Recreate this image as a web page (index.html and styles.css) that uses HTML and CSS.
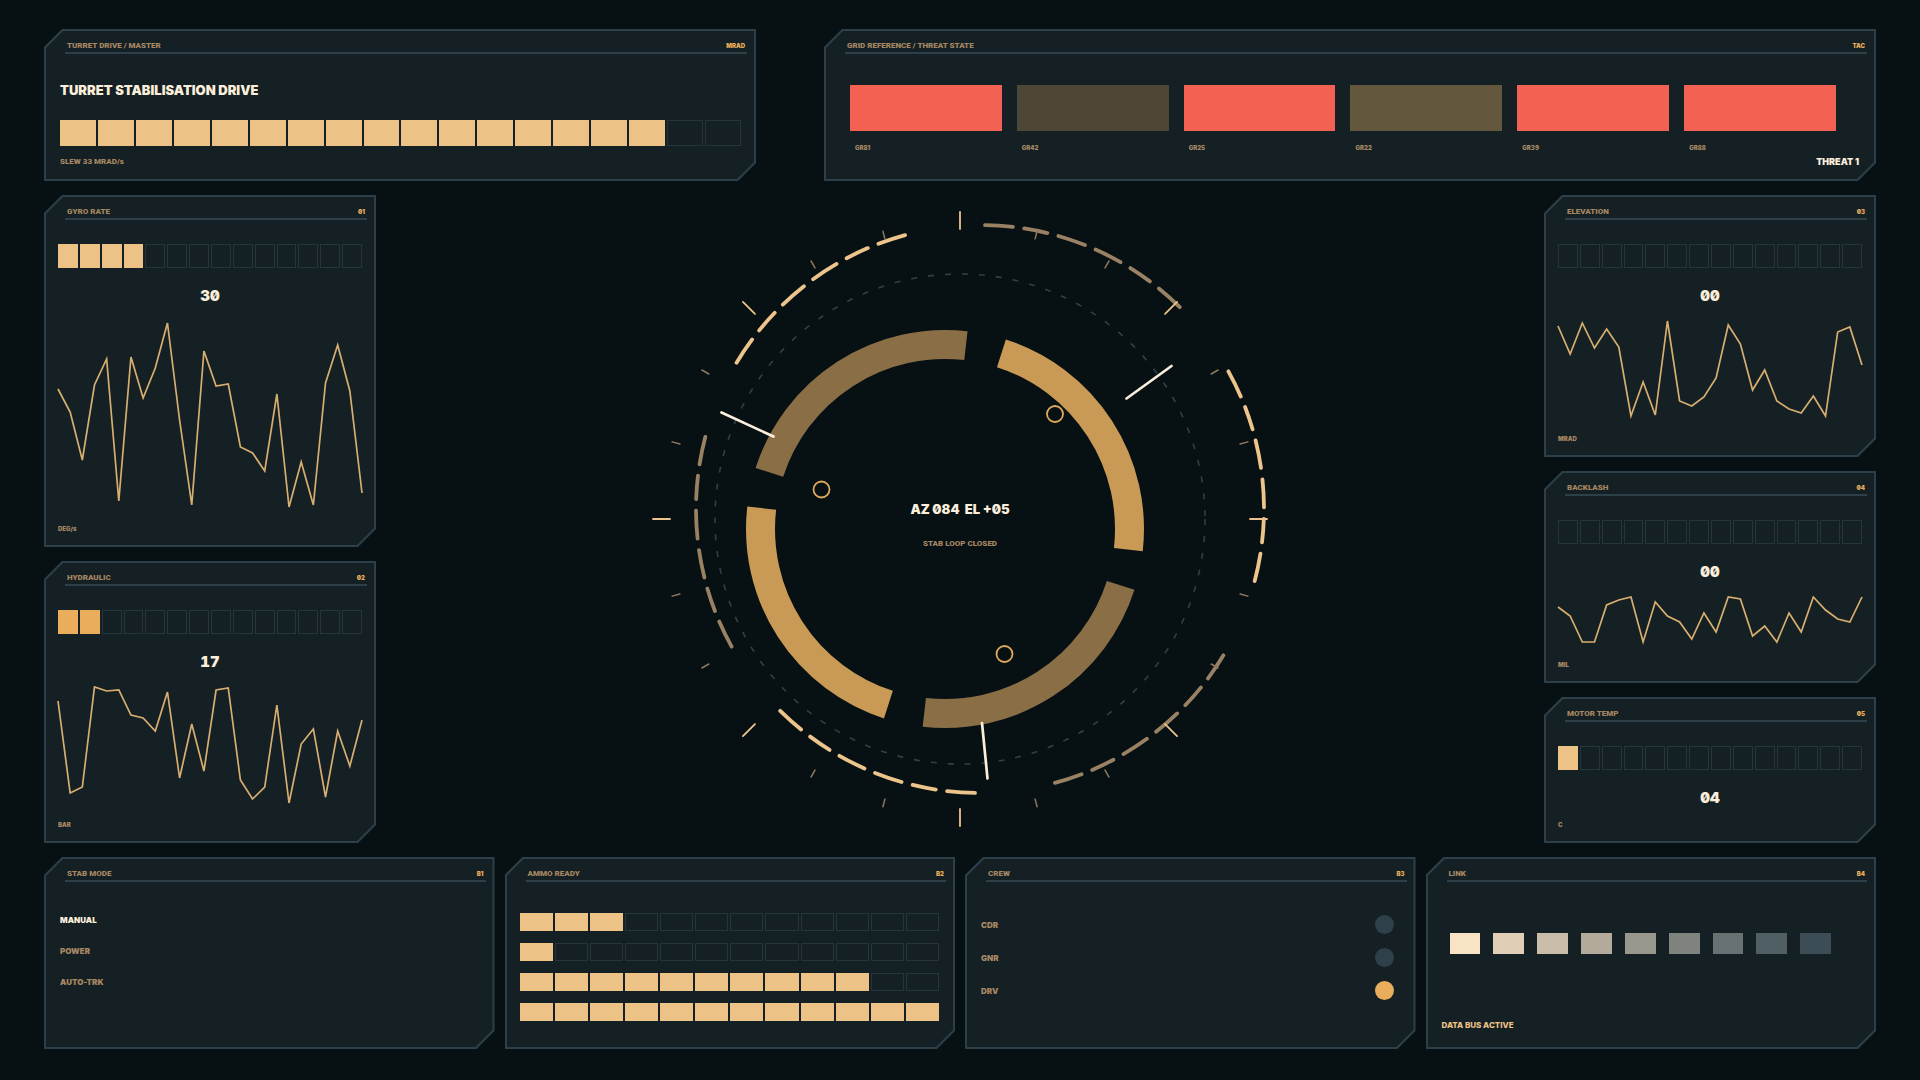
FILE: index.html
```html
<!DOCTYPE html>
<html lang="en">
  <head>
    <meta charset="UTF-8" />
    <meta name="viewport" content="width=device-width, initial-scale=1.0" />
    <title>Turret Stabilisation Drive</title>
    <link rel="stylesheet" href="styles.css">
  </head>
  <body>
    <main class="console">
      <!-- Top row -->
      <div class="row-top">
        <section class="panel">
          <header class="panel-head">
            <h2>TURRET DRIVE / MASTER</h2>
            <span class="tag">MRAD</span>
          </header>
          <div class="drive">
            <h1>TURRET STABILISATION DRIVE</h1>
            <div class="cells cells-drive" data-total="18" data-on="16"></div>
            <p class="note">SLEW 33 MRAD/s</p>
          </div>
        </section>

        <section class="panel">
          <header class="panel-head">
            <h2>GRID REFERENCE / THREAT STATE</h2>
            <span class="tag">TAC</span>
          </header>
          <ul class="threats">
            <li><span class="block hot"></span><span class="grid-ref">GR81</span></li>
            <li><span class="block cold"></span><span class="grid-ref">GR42</span></li>
            <li><span class="block hot"></span><span class="grid-ref">GR25</span></li>
            <li><span class="block warm"></span><span class="grid-ref">GR22</span></li>
            <li><span class="block hot"></span><span class="grid-ref">GR39</span></li>
            <li><span class="block hot"></span><span class="grid-ref">GR88</span></li>
          </ul>
          <p class="threat-level">THREAT 1</p>
        </section>
      </div>

      <!-- Gauges and dial -->
      <div class="row-middle">
        <div class="side side-left">
          <section class="panel">
            <header class="panel-head">
              <h2>GYRO RATE</h2>
              <span class="tag">01</span>
            </header>
            <div class="gauge">
              <div class="cells" data-total="14" data-on="4"></div>
              <p class="value">30</p>
              <svg class="spark" viewBox="0 0 25 194" preserveAspectRatio="none" data-values="72,95,143,68,42,184,40,81,51,6,103,188,34,69,67,130,136,154,77,190,145,188,66,28,74,176"></svg>
              <p class="unit">DEG/s</p>
            </div>
          </section>

          <section class="panel">
            <header class="panel-head">
              <h2>HYDRAULIC</h2>
              <span class="tag">02</span>
            </header>
            <div class="gauge">
              <div class="cells amber" data-total="14" data-on="2"></div>
              <p class="value">17</p>
              <svg class="spark" viewBox="0 0 25 124" preserveAspectRatio="none" data-values="18,110,104,4,8,7,32,35,48,9,95,41,88,7,5,97,116,104,22,120,61,46,114,48,83,37"></svg>
              <p class="unit">BAR</p>
            </div>
          </section>
        </div>

        <svg class="dial" viewBox="-324 -324 648 648">
          <circle class="dotted" r="245" />
          <g id="arcs" transform="translate(20 -10)"></g>
          <g id="ticks"></g>

          <g class="ring" transform="translate(-15 10)">
            <circle class="ring-bright" r="184.5" transform="rotate(-72.2)" />
            <circle class="ring-dim" r="184.5" transform="rotate(17.8)" />
          </g>

          <g class="pins">
            <line x1="-238.5" y1="-106.5" x2="-186.5" y2="-82.5" />
            <line x1="211.5" y1="-153" x2="166.5" y2="-120.5" />
            <line x1="22" y1="204" x2="27.5" y2="259.5" />
          </g>

          <g class="markers">
            <circle cx="-138.5" cy="-29.5" r="8" />
            <circle cx="95" cy="-105" r="8" />
            <circle cx="44.5" cy="135" r="8" />
          </g>

          <text class="bearing" x="0" y="-5">AZ 084&#160; EL +05</text>
          <text class="loop" x="0" y="27">STAB LOOP CLOSED</text>
        </svg>

        <div class="side side-right">
          <section class="panel">
            <header class="panel-head">
              <h2>ELEVATION</h2>
              <span class="tag">03</span>
            </header>
            <div class="gauge">
              <div class="cells" data-total="14" data-on="0"></div>
              <p class="value">00</p>
              <svg class="spark" viewBox="0 0 25 104" preserveAspectRatio="none" data-values="9,37,6,31,12,30,99,65,98,4,84,89,80,61,8,27,73,53,84,92,96,79,99,15,10,48"></svg>
              <p class="unit">MRAD</p>
            </div>
          </section>

          <section class="panel">
            <header class="panel-head">
              <h2>BACKLASH</h2>
              <span class="tag">04</span>
            </header>
            <div class="gauge">
              <div class="cells" data-total="14" data-on="0"></div>
              <p class="value">00</p>
              <svg class="spark" viewBox="0 0 25 54" preserveAspectRatio="none" data-values="14,23,49,49,12,7,4,49,9,23,29,46,20,39,4,6,43,33,49,20,39,4,17,26,29,4"></svg>
              <p class="unit">MIL</p>
            </div>
          </section>

          <section class="panel">
            <header class="panel-head">
              <h2>MOTOR TEMP</h2>
              <span class="tag">05</span>
            </header>
            <div class="gauge">
              <div class="cells" data-total="14" data-on="1"></div>
              <p class="value">04</p>
              <p class="unit">C</p>
            </div>
          </section>
        </div>
      </div>

      <!-- Bottom row -->
      <div class="row-bottom">
        <section class="panel">
          <header class="panel-head">
            <h2>STAB MODE</h2>
            <span class="tag">B1</span>
          </header>
          <div class="modes">
            <button class="mode active" type="button">MANUAL</button>
            <button class="mode" type="button">POWER</button>
            <button class="mode" type="button">AUTO-TRK</button>
          </div>
        </section>

        <section class="panel">
          <header class="panel-head">
            <h2>AMMO READY</h2>
            <span class="tag">B2</span>
          </header>
          <div class="ammo">
            <div class="cells" data-total="12" data-on="3"></div>
            <div class="cells" data-total="12" data-on="1"></div>
            <div class="cells" data-total="12" data-on="10"></div>
            <div class="cells" data-total="12" data-on="12"></div>
          </div>
        </section>

        <section class="panel">
          <header class="panel-head">
            <h2>CREW</h2>
            <span class="tag">B3</span>
          </header>
          <ul class="crew">
            <li>CDR <span class="lamp"></span></li>
            <li>GNR <span class="lamp"></span></li>
            <li>DRV <span class="lamp on"></span></li>
          </ul>
        </section>

        <section class="panel">
          <header class="panel-head">
            <h2>LINK</h2>
            <span class="tag">B4</span>
          </header>
          <div class="link-bars">
            <span></span><span></span><span></span>
            <span></span><span></span><span></span>
            <span></span><span></span><span></span>
          </div>
          <p class="bus">DATA BUS ACTIVE</p>
        </section>
      </div>
    </main>

    <script src="script.js"></script>
  </body>
</html>
```
FILE: styles.css
```css
:root {
  --bg: #071013;
  --panel: #152024;
  --line: #2d404a;
  --cell: #26353d;
  --sand: #edc287;
  --amber: #e9ad5c;
  --muted: #a68763;
  --cream: #fbeedb;
  --red: #f26152;
}

* {
  box-sizing: border-box;
}

body {
  margin: 0;
  background-color: var(--bg);
  color: var(--muted);
  font-family: Inter, "Liberation Sans", sans-serif;
  font-feature-settings: "zero";
  font-weight: 900;
  font-size: 8px;
  line-height: 12px;
}

h1,
h2,
p,
ul {
  margin: 0;
  padding: 0;
  list-style: none;
}

.console {
  display: grid;
  grid-template-rows: minmax(152px, auto) 1fr minmax(192px, auto);
  gap: 14px;
  min-height: 100vh;
  padding: 29px 44px 31px;
}

.row-top {
  display: grid;
  grid-template-columns: 712fr 1052fr;
  gap: 68px;
}

.row-middle {
  display: grid;
  grid-template-columns: 332px 1fr 332px;
}

.row-bottom {
  display: grid;
  grid-template-columns: repeat(4, 1fr);
  gap: 10px;
}

/* Panel with two cut corners: outline colour below, fill on top */
.panel {
  position: relative;
  z-index: 0;
  display: flex;
  flex-direction: column;
  min-width: 0;
  background-color: var(--line);
  clip-path: polygon(18px 0, 100% 0, 100% calc(100% - 18px), calc(100% - 18px) 100%, 0 100%, 0 18px);
}

.panel::before {
  content: "";
  position: absolute;
  inset: 2px;
  z-index: -1;
  background-color: var(--panel);
  clip-path: polygon(17px 0, 100% 0, 100% calc(100% - 17px), calc(100% - 17px) 100%, 0 100%, 0 17px);
}

.panel-head {
  display: flex;
  justify-content: space-between;
  height: 25px;
  margin: 0 9px 0 21px;
  padding: 9px 2px 0;
  border-bottom: 2px solid var(--line);
  line-height: 16px;
}

.panel-head h2,
.note,
.loop {
  font-family: Roboto, "Liberation Sans", sans-serif;
  font-size: 8px;
  font-weight: 900;
}

.tag {
  color: var(--amber);
  font-size: 6px;
}

/* Segment bars */
.cells {
  display: flex;
  gap: 2px;
  height: 24px;
}

.cell {
  flex: 1;
  border: 1px solid var(--cell);
}

.cell.on {
  border-color: var(--sand);
  background-color: var(--sand);
}

.amber .cell.on {
  border-color: var(--amber);
  background-color: var(--amber);
}

/* Turret drive */
.drive {
  padding: 26px 15px 0 16px;
}

.drive h1 {
  color: var(--cream);
  font-size: 13px;
  font-weight: 900;
  line-height: 20px;
}

.cells-drive {
  height: 26px;
  margin: 20px 0 10px;
}

/* Threat state */
.threats {
  display: grid;
  grid-template-columns: repeat(6, 1fr);
  gap: 15px;
  padding: 31px 40px 0 26px;
}

.block {
  display: block;
  height: 46px;
  margin-bottom: 11px;
}

.grid-ref {
  display: block;
  padding-left: 5px;
  font-size: 6px;
}

.hot {
  background-color: var(--red);
}

.warm {
  background-color: #63573e;
}

.cold {
  background-color: #4e4737;
}

.threat-level {
  padding: 2px 17px 0;
  color: var(--cream);
  font-size: 9px;
  text-align: right;
}

/* Side gauges */
.side {
  display: grid;
  gap: 14px;
}

.side-left {
  grid-template-rows: 352fr 282fr;
}

.side-right {
  grid-template-rows: 262fr 212fr 146fr;
}

.gauge {
  display: flex;
  flex: 1;
  flex-direction: column;
  padding: 24px 14px 12px;
}

.value {
  margin: 18px 0 11px;
  color: var(--cream);
  font-size: 15px;
  font-feature-settings: "zero", "tnum";
  line-height: 20px;
  text-align: center;
}

.spark {
  flex: 1 1 0px;
  width: 100%;
  height: 0;
  min-height: 0;
  margin-bottom: 12px;
  overflow: visible;
}

.spark polyline {
  fill: none;
  stroke: #d8ae70;
  stroke-width: 1.7;
  vector-effect: non-scaling-stroke;
}

.unit {
  margin-top: auto;
  font-size: 6px;
}

/* Dial: takes the height the side columns leave it */
.dial {
  width: 100%;
  height: 0;
  min-height: 100%;
}

.dial circle,
.dial path {
  fill: none;
}

.dotted {
  stroke: #2f4048;
  stroke-width: 1.6;
  stroke-dasharray: 6 11;
}

.arc {
  stroke-width: 3.8;
  stroke-linecap: round;
  stroke-dasharray: 28 11.5 23.5 11.5 28 11.5;
}

.bright {
  stroke: #edc58c;
}

.dim {
  stroke: #998163;
}

.tick {
  stroke: #8f7a5d;
  stroke-width: 1.5;
  stroke-linecap: round;
}

.tick.major {
  stroke: #edc58c;
  stroke-width: 1.8;
}

.ring circle {
  stroke-width: 29;
  stroke-dasharray: 253.1 326.5;
}

.ring-bright {
  stroke: #c89a55;
}

.ring-dim {
  stroke: #896e46;
}

.pins line {
  stroke: var(--cream);
  stroke-width: 2.7;
  stroke-linecap: round;
}

.markers circle {
  stroke: #dfa95c;
  stroke-width: 1.8;
}

.dial text {
  text-anchor: middle;
}

.bearing {
  fill: var(--cream);
  font-size: 13px;
}

.loop {
  fill: var(--muted);
}

/* Stab mode */
.modes {
  display: flex;
  flex-direction: column;
  align-items: flex-start;
  gap: 19px;
  padding: 32px 16px 0;
}

.mode {
  padding: 0;
  border: 0;
  background: none;
  color: var(--muted);
  font: inherit;
  cursor: pointer;
}

.mode.active {
  color: var(--cream);
}

/* Ammo */
.ammo {
  display: flex;
  flex-direction: column;
  gap: 12px;
  padding: 31px 16px 0 15px;
}

.ammo .cells {
  height: 18px;
}

/* Crew */
.crew {
  display: flex;
  flex-direction: column;
  gap: 14px;
  padding: 33px 22px 0 16px;
}

.crew li {
  display: flex;
  align-items: center;
  justify-content: space-between;
}

.lamp {
  width: 19px;
  height: 19px;
  border-radius: 50%;
  background-color: #2e404a;
}

.lamp.on {
  background-color: var(--amber);
}

/* Link */
.link-bars {
  display: grid;
  grid-template-columns: repeat(9, 1fr);
  gap: 13px;
  padding: 51px 45px 0 24px;
}

.link-bars span {
  height: 21px;
  background-color: #f9e3c5;
}

.link-bars span:nth-child(2) { background-color: #e0cfb6; }
.link-bars span:nth-child(3) { background-color: #c9bdaa; }
.link-bars span:nth-child(4) { background-color: #b2aa9a; }
.link-bars span:nth-child(5) { background-color: #97988b; }
.link-bars span:nth-child(6) { background-color: #7e847d; }
.link-bars span:nth-child(7) { background-color: #667372; }
.link-bars span:nth-child(8) { background-color: #505f63; }
.link-bars span:nth-child(9) { background-color: #3d4d57; }

.bus {
  margin-top: auto;
  padding: 0 16px 18px;
  color: var(--sand);
  font-weight: 800;
}
```
FILE: script.js
```js
const SVG_NS = "http://www.w3.org/2000/svg";

function addShape(parent, name, attrs) {
  const el = document.createElementNS(SVG_NS, name);
  Object.entries(attrs).forEach(([key, value]) => el.setAttribute(key, value));
  parent.appendChild(el);
}

// Segment bars
document.querySelectorAll(".cells").forEach((bar) => {
  for (let i = 0; i < Number(bar.dataset.total); i++) {
    const cell = document.createElement("span");
    cell.className = i < Number(bar.dataset.on) ? "cell on" : "cell";
    bar.appendChild(cell);
  }
});

// Sparklines
document.querySelectorAll(".spark").forEach((spark) => {
  const points = spark.dataset.values.split(",").map((y, x) => `${x},${y}`).join(" ");
  addShape(spark, "polyline", { points });
});

// Point on a circle, degrees clockwise from 3 o'clock
function polar(radius, degrees) {
  const a = (degrees * Math.PI) / 180;
  return [radius * Math.cos(a), radius * Math.sin(a)].map((n) => n.toFixed(2));
}

// Six outer dashed arcs
const arcs = document.getElementById("arcs");
for (let i = 0; i < 6; i++) {
  const start = polar(284, -89 + i * 60);
  const end = polar(284, -44.9 + i * 60);
  addShape(arcs, "path", {
    class: i % 2 ? "arc bright" : "arc dim",
    d: `M${start} A284 284 0 0 1 ${end}`,
  });
}

// Bearing ticks every 15 degrees, long ones every 45
const ticks = document.getElementById("ticks");
for (let deg = 0; deg < 360; deg += 15) {
  const major = deg % 45 === 0;
  const [x1, y1] = polar(290, deg);
  const [x2, y2] = polar(major ? 307 : 298, deg);
  addShape(ticks, "line", { class: major ? "tick major" : "tick", x1, y1, x2, y2 });
}
```
